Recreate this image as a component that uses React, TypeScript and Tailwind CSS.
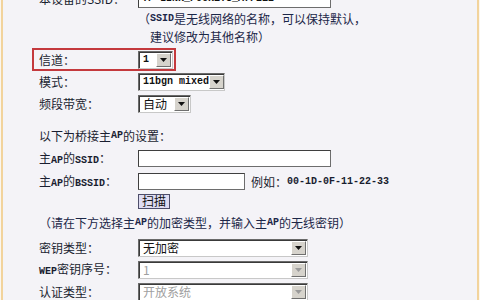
import type { ReactNode } from "react"

const cjk = "font-['Noto_Sans_CJK_SC',sans-serif]"

function M({ children }: { children: ReactNode }) {
  return <span className="font-['Liberation_Mono',monospace] text-[10px] font-bold whitespace-pre">{children}</span>
}

function Arrow({ disabled }: { disabled?: boolean }) {
  return (
    <div className="flex h-full w-[15px] shrink-0 items-center justify-center border border-t-white border-l-white border-b-[#6f6f6f] border-r-[#6f6f6f] bg-[#d6d3cc]">
      <svg width="7" height="4" viewBox="0 0 7 4">
        <path d="M0 0h7L3.5 4z" fill={disabled ? "#9a9a9a" : "#111"} />
      </svg>
    </div>
  )
}

function Select({ w, children, disabled }: { w: string; children: ReactNode; disabled?: boolean }) {
  return (
    <div
      className={`flex h-[18px] ${w} items-stretch border border-t-[#6a6a6a] border-l-[#6a6a6a] border-b-[#c8c8c8] border-r-[#c8c8c8] bg-white p-px shadow-[inset_1px_1px_0_#3a3a3a]`}
    >
      <div
        className={`flex flex-1 items-center whitespace-nowrap pl-[3px] text-[12px] ${disabled ? "text-[#a0a0a0]" : "text-[#111]"}`}
      >
        {children}
      </div>
      <Arrow disabled={disabled} />
    </div>
  )
}

function Input({ w, children }: { w: string; children?: ReactNode }) {
  return (
    <div
      className={`flex h-[17px] ${w} items-center overflow-hidden whitespace-nowrap border border-[#6d6d6d] border-t-[#3f3f3f] border-l-[#3f3f3f] bg-white pl-[3px] text-[12px] text-[#111]`}
    >
      {children}
    </div>
  )
}

function Row({ label, h, children }: { label: ReactNode; h: string; children: ReactNode }) {
  return (
    <div className={`flex ${h} items-center pl-[36px]`}>
      <div className="w-[99px] shrink-0 whitespace-nowrap">{label}</div>
      {children}
    </div>
  )
}

export default function App() {
  return (
    <div className={`flex h-[300px] w-[480px] overflow-hidden bg-[#fbf6ee] ${cjk} text-[12px] leading-none text-[#1a1e30]`}>
      <div className="ml-px w-[2px] shrink-0 bg-[#f2d39c]" />
      <div className="flex-1 overflow-hidden bg-[#f4f3f7]">
        <div className="-mt-[12px] flex flex-col">
          <Row label="本设备的SSID：" h="h-[22px]">
            <Input w="w-[193px]">
              <M>TP-LINK_POCKET3_A7F2E2</M>
            </Input>
          </Row>
          <div className="flex h-[18px] items-center whitespace-nowrap pl-[135px] text-[#1c2748]">
            （<M>SSID</M>是无线网络的名称，可以保持默认，
          </div>
          <div className="flex h-[18px] items-center pl-[147px] text-[#1c2748]">建议修改为其他名称）</div>

          <div className="mt-[2px] ml-[29px] flex h-[23px] w-[144px] items-center border-2 border-[#c4393d] pl-[5px]">
            <div className="w-[99px] shrink-0">信道：</div>
            <Select w="w-[35px]">
              <M>1</M>
            </Select>
          </div>

          <Row label="模式：" h="h-[22px]">
            <Select w="w-[87px]">
              <M>11bgn mixed</M>
            </Select>
          </Row>
          <Row label="频段带宽：" h="h-[22px]">
            <Select w="w-[53px]">自动</Select>
          </Row>

          <div className="mt-[10px] flex h-[22px] items-center pl-[36px]">
            以下为桥接主<M>AP</M>的设置：
          </div>
          <Row label={<>主<M>AP</M>的<M>SSID</M>：</>} h="h-[23px]">
            <Input w="w-[193px]" />
          </Row>
          <Row label={<>主<M>AP</M>的<M>BSSID</M>：</>} h="h-[23px]">
            <Input w="w-[107px]" />
            <div className="ml-[6px] flex items-center whitespace-nowrap">
              例如：<M>00-1D-0F-11-22-33</M>
            </div>
          </Row>
          <div className="flex h-[16px] items-center pl-[135px]">
            <button className="flex h-[15px] w-[32px] items-center justify-center border border-[#4d4d6a] bg-[#dedcf2] text-[12px] text-[#111]">
              扫描
            </button>
          </div>

          <div className="flex h-[28px] items-center whitespace-nowrap pl-[36px] text-[#1c2748]">
            （请在下方选择主<M>AP</M>的加密类型，并输入主<M>AP</M>的无线密钥）
          </div>
          <Row label="密钥类型：" h="h-[22px]">
            <Select w="w-[170px]">无加密</Select>
          </Row>
          <Row label={<><M>WEP</M>密钥序号：</>} h="h-[22px]">
            <Select w="w-[170px]" disabled>
              1
            </Select>
          </Row>
          <Row label="认证类型：" h="h-[22px]">
            <Select w="w-[170px]" disabled>
              开放系统
            </Select>
          </Row>
        </div>
      </div>
      <div className="w-[2px] shrink-0 bg-[#f2d39c]" />
      <div className="w-px shrink-0 bg-[#fbf6ee]" />
    </div>
  )
}
